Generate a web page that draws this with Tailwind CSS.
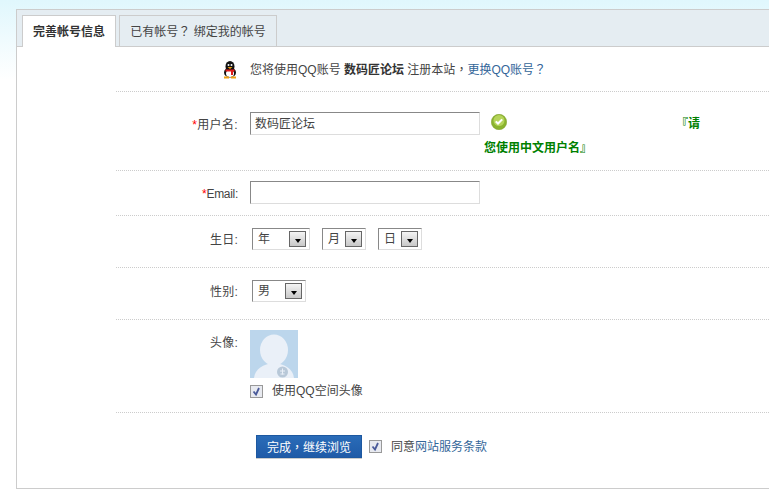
<!DOCTYPE html>
<html>
<head>
<meta charset="utf-8">
<title>完善帐号信息</title>
<script src="https://cdn.jsdelivr.net/npm/@tailwindcss/browser@4"></script>
</head>
<body class="w-[769px] h-[492px] overflow-hidden bg-white bg-gradient-to-b from-[#e0f7fd] to-white to-[80px] font-['Liberation_Sans','Noto_Sans_CJK_SC',sans-serif] text-xs text-[#444]">
<div class="pt-[9px] pl-4">
  <!-- panel -->
  <div class="w-[753px] h-[480px] bg-white border border-r-0 border-[#ccc]">
    <div class="flex h-[37px] pl-[5px] gap-[3px] bg-[#e5edf2] border-b border-[#ccc]">
      <div class="mt-[5px] w-[94px] h-[32px] bg-white border border-[#ccc] border-b-0 flex items-center justify-center font-bold text-[#333]">完善帐号信息</div>
      <div class="mt-[5px] w-[158px] h-[31px] border border-[#ccc] border-b-0 flex items-center justify-center text-[#444]"><span>已有帐号<span class="font-['Noto_Sans_CJK_TC']">？</span> 绑定我的帐号</span></div>
    </div>

    <div class="ml-[99px]">
      <!-- intro -->
      <div class="h-[45px] pt-px border-b border-dotted border-[#ccc] flex items-center pl-[106px]">
        <svg class="w-4 h-[18px] mr-[12px]" viewBox="0 0 16 18">
          <ellipse cx="8" cy="5.500" rx="4.500" ry="5.500" fill="#111"/>
          <ellipse cx="8" cy="11.500" rx="6" ry="5" fill="#111"/>
          <ellipse cx="8" cy="12.500" rx="4" ry="3.500" fill="#fff"/>
          <circle cx="6.500" cy="4" r="1" fill="#fff"/>
          <circle cx="9.500" cy="4" r="1" fill="#fff"/>
          <path d="M5.500 6h5l-2.500 2z" fill="#f0a010"/>
          <path d="M3.500 8.500h9v2h-1.500v3.500h-2v-3.500h-5.500z" fill="#e01b1b"/>
          <path d="M2 15.500h5v2h-5zM9 15.500h5v2h-5z" fill="#f0a010"/>
        </svg>
        <span>您将使用QQ账号 <b class="text-[#333]">数码匠论坛</b> 注册本站<span class="font-['Noto_Sans_CJK_TC']">，</span><span class="text-[#369]">更换QQ账号<span class="font-['Noto_Sans_CJK_TC']">？</span></span></span>
      </div>

      <!-- username -->
      <div class="h-[79px] border-b border-dotted border-[#ccc] flex">
        <div class="w-[122px] pt-[25px] text-right tracking-[.35px]"><span class="text-[#f00]">*</span>用户名:</div>
        <div class="ml-3 pt-5">
          <div class="w-[230px] h-[23px] bg-white border border-[#ddd] border-t-[#888] border-l-[#888] pl-1 leading-[23px] text-[#444]">数码匠论坛</div>
        </div>
        <p class="ml-1 w-[216px] pt-5 font-bold text-[#008000] leading-6">
          <svg class="inline-block align-top mt-[2px] ml-[7px] mr-[169px] w-4 h-4" viewBox="0 0 16 16">
            <circle cx="8" cy="8" r="7.700" fill="#8ab32e" stroke="#7a9a24" stroke-width=".5"/>
            <circle cx="8" cy="6.500" r="5.500" fill="#b5d45a"/>
            <path d="M4 8l3 3 5-5-1.500-1.300-3.500 3.300-1.500-1.300z" fill="#fff"/>
          </svg>『请您使用中文用户名』</p>
      </div>

      <!-- email -->
      <div class="h-[45px] border-b border-dotted border-[#ccc] flex">
        <div class="w-[122px] pt-[15px] text-right tracking-[-.3px]"><span class="text-[#f00]">*</span>Email:</div>
        <div class="ml-3 pt-[10px]">
          <div class="w-[230px] h-[23px] bg-white border border-[#ddd] border-t-[#888] border-l-[#888]"></div>
        </div>
      </div>

      <!-- birthday -->
      <div class="h-[52px] border-b border-dotted border-[#ccc] flex">
        <div class="w-[122px] pt-[16px] text-right tracking-[.2px]">生日:</div>
        <div class="ml-[14px] pt-3 flex gap-3">
          <div class="w-[58px] h-[22px] border border-[#ddd] border-t-[#888] border-l-[#888] flex items-center justify-between pl-[5px] pr-[3px]">
            <span>年</span>
            <span class="w-[17px] h-[16px] border border-[#666] bg-gradient-to-b from-[#f4f4f4] to-[#c8c8c8] flex items-end justify-center pb-[3px]"><span class="border-x-[3.5px] border-x-transparent border-t-4 border-t-black"></span></span>
          </div>
          <div class="w-[44px] h-[22px] border border-[#ddd] border-t-[#888] border-l-[#888] flex items-center justify-between pl-[5px] pr-[3px]">
            <span>月</span>
            <span class="w-[17px] h-[16px] border border-[#666] bg-gradient-to-b from-[#f4f4f4] to-[#c8c8c8] flex items-end justify-center pb-[3px]"><span class="border-x-[3.5px] border-x-transparent border-t-4 border-t-black"></span></span>
          </div>
          <div class="w-[44px] h-[22px] border border-[#ddd] border-t-[#888] border-l-[#888] flex items-center justify-between pl-[5px] pr-[3px]">
            <span>日</span>
            <span class="w-[17px] h-[16px] border border-[#666] bg-gradient-to-b from-[#f4f4f4] to-[#c8c8c8] flex items-end justify-center pb-[3px]"><span class="border-x-[3.5px] border-x-transparent border-t-4 border-t-black"></span></span>
          </div>
        </div>
      </div>

      <!-- gender -->
      <div class="h-[52px] border-b border-dotted border-[#ccc] flex">
        <div class="w-[122px] pt-[16px] text-right tracking-[.2px]">性别:</div>
        <div class="ml-[14px] pt-3">
          <div class="w-[54px] h-[22px] border border-[#ddd] border-t-[#888] border-l-[#888] flex items-center justify-between pl-[5px] pr-[3px]">
            <span>男</span>
            <span class="w-[17px] h-[16px] border border-[#666] bg-gradient-to-b from-[#f4f4f4] to-[#c8c8c8] flex items-end justify-center pb-[3px]"><span class="border-x-[3.5px] border-x-transparent border-t-4 border-t-black"></span></span>
          </div>
        </div>
      </div>

      <!-- avatar -->
      <div class="h-[93px] border-b border-dotted border-[#ccc] flex">
        <div class="w-[122px] pt-[15px] text-right tracking-[.2px]">头像:</div>
        <div class="ml-3 pt-[10px]">
          <svg class="w-12 h-12" viewBox="0 0 48 48">
            <rect width="48" height="48" fill="#bcd6ec"/>
            <ellipse cx="24" cy="20" rx="14" ry="15.500" fill="#eaf0f8"/>
            <path d="M4 48c1-9 9-14 20-15 11 1 19 6 20 15z" fill="#eaf0f8"/>
            <circle cx="32.500" cy="42" r="5.500" fill="#b8c8d8"/>
            <path d="M30 41h5M30.500 44h4M32.500 38.500v6" stroke="#eaf0f8" stroke-width="1"/>
          </svg>
          <div class="flex items-center mt-[5px]">
            <svg class="w-[13px] h-[13px]" viewBox="0 0 13 13">
              <rect x=".5" y=".5" width="12" height="12" fill="#e8eaf0" stroke="#999"/>
              <path d="M3.500 6.500l2.500 3 3-6.500" fill="none" stroke="#4a5a9a" stroke-width="1.800"/>
            </svg>
            <span class="ml-[9px]">使用QQ空间头像</span>
          </div>
        </div>
      </div>

      <!-- submit -->
      <div class="flex items-center pl-[140px] pt-[22px]">
        <div class="w-[106px] h-[23px] pt-px bg-gradient-to-b from-[#2a6cb8] to-[#1f5ba8] border border-[#1d58a0] shadow-[0_1px_0_#ccc] flex items-center justify-center text-white"><span>完成<span class="font-['Noto_Sans_CJK_TC']">，</span>继续浏览</span></div>
        <svg class="ml-[7px] w-[13px] h-[13px]" viewBox="0 0 13 13">
          <rect x=".5" y=".5" width="12" height="12" fill="#e8eaf0" stroke="#999"/>
          <path d="M3.500 6.500l2.500 3 3-6.500" fill="none" stroke="#4a5a9a" stroke-width="1.800"/>
        </svg>
        <span class="ml-[9px]">同意<span class="text-[#369]">网站服务条款</span></span>
      </div>
    </div>
  </div>
</div>
</body>
</html>
